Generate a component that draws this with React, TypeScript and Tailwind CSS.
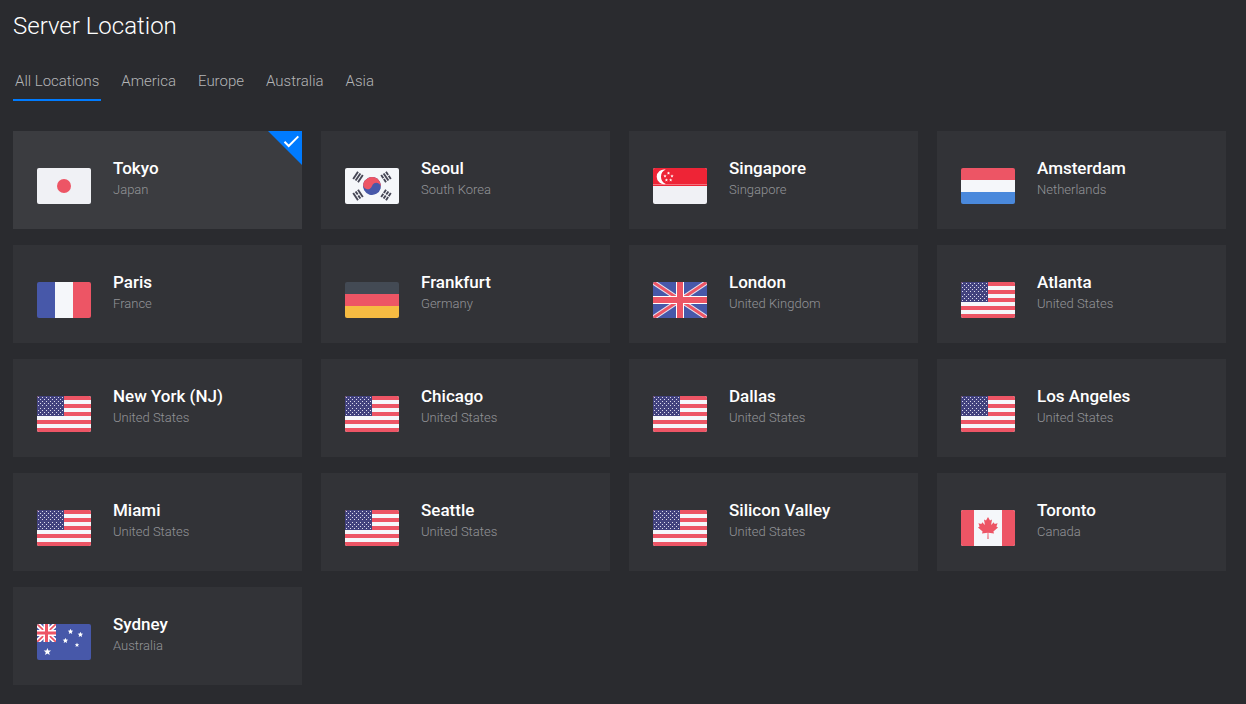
import { useState, type ReactNode } from 'react';
import clsx from 'clsx';

type Country = 'jp' | 'kr' | 'sg' | 'nl' | 'fr' | 'de' | 'gb' | 'us' | 'ca' | 'au';
type Region = 'America' | 'Europe' | 'Australia' | 'Asia';

interface Location {
  city: string;
  country: Country;
}

const COUNTRIES: Record<Country, { name: string; region: Region }> = {
  jp: { name: 'Japan', region: 'Asia' },
  kr: { name: 'South Korea', region: 'Asia' },
  sg: { name: 'Singapore', region: 'Asia' },
  nl: { name: 'Netherlands', region: 'Europe' },
  fr: { name: 'France', region: 'Europe' },
  de: { name: 'Germany', region: 'Europe' },
  gb: { name: 'United Kingdom', region: 'Europe' },
  us: { name: 'United States', region: 'America' },
  ca: { name: 'Canada', region: 'America' },
  au: { name: 'Australia', region: 'Australia' },
};

const LOCATIONS: Location[] = [
  { city: 'Tokyo', country: 'jp' },
  { city: 'Seoul', country: 'kr' },
  { city: 'Singapore', country: 'sg' },
  { city: 'Amsterdam', country: 'nl' },
  { city: 'Paris', country: 'fr' },
  { city: 'Frankfurt', country: 'de' },
  { city: 'London', country: 'gb' },
  { city: 'Atlanta', country: 'us' },
  { city: 'New York (NJ)', country: 'us' },
  { city: 'Chicago', country: 'us' },
  { city: 'Dallas', country: 'us' },
  { city: 'Los Angeles', country: 'us' },
  { city: 'Miami', country: 'us' },
  { city: 'Seattle', country: 'us' },
  { city: 'Silicon Valley', country: 'us' },
  { city: 'Toronto', country: 'ca' },
  { city: 'Sydney', country: 'au' },
];

const TABS = ['All Locations', 'America', 'Europe', 'Australia', 'Asia'] as const;

const RED = '#ed5565';
const WHITE = '#f5f7fa';
const BLUE = '#4758a9';

function starPoints(cx: number, cy: number, r: number) {
  return Array.from({ length: 10 }, (_, i) => {
    const radius = i % 2 ? r * 0.45 : r;
    const angle = (Math.PI / 5) * i - Math.PI / 2;
    return `${(cx + radius * Math.cos(angle)).toFixed(2)},${(cy + radius * Math.sin(angle)).toFixed(2)}`;
  }).join(' ');
}

function Star({ x, y, r }: { x: number; y: number; r: number }) {
  return <polygon points={starPoints(x, y, r)} fill="#fff" />;
}

function Trigram({ x, y, angle, broken }: { x: number; y: number; angle: number; broken: boolean[] }) {
  return (
    <g transform={`translate(${x} ${y}) rotate(${angle})`} stroke="#464655" strokeWidth="1.9">
      {broken.map((isBroken, i) => (
        <path key={i} d={isBroken ? `M-4.3 ${(i - 1) * 2.9}h3.8M.5 ${(i - 1) * 2.9}h3.8` : `M-4.3 ${(i - 1) * 2.9}h8.6`} />
      ))}
    </g>
  );
}

const cantonStars = Array.from({ length: 9 }, (_, row) =>
  Array.from({ length: row % 2 ? 6 : 7 }, (_, col) => ({
    x: (row % 2 ? 3 : 1) + col * 4,
    y: 1 + row * 2 + (row > 4 ? 1 : 0),
  })),
).flat();

const FLAGS: Record<Country, ReactNode> = {
  jp: (
    <>
      <path fill="#f0f1f5" d="M0 0h54v36H0z" />
      <circle cx="27" cy="18" r="7" fill={RED} />
    </>
  ),
  kr: (
    <>
      <path fill={WHITE} d="M0 0h54v36H0z" />
      <g transform="rotate(16 27 18)">
        <circle cx="27" cy="18" r="9" fill={BLUE} />
        <path fill={RED} d="M18 18A9 9 0 0 1 36 18A4.5 4.5 0 0 0 27 18A4.5 4.5 0 0 1 18 18z" />
      </g>
      <Trigram x={13} y={9} angle={-56} broken={[false, false, false]} />
      <Trigram x={41} y={9} angle={56} broken={[true, false, true]} />
      <Trigram x={13} y={27} angle={56} broken={[false, true, false]} />
      <Trigram x={41} y={27} angle={-56} broken={[true, true, true]} />
    </>
  ),
  sg: (
    <>
      <path fill="#f0f1f5" d="M0 0h54v36H0z" />
      <path fill="#ee2436" d="M0 0h54v16H0zM0 17h54v1H0z" />
      <path fill="#f4707c" d="M0 16h54v1H0z" />
      <path fill="#fff" d="M12.8 1.6a7.4 7.4 0 1 0 0 14.4a7.8 7.8 0 0 1 0-14.4z" />
      <Star x={15.5} y={5.2} r={1.7} />
      <Star x={12} y={8} r={1.7} />
      <Star x={19} y={8} r={1.7} />
      <Star x={13.4} y={12} r={1.7} />
      <Star x={17.7} y={12} r={1.7} />
    </>
  ),
  nl: (
    <>
      <path fill={RED} d="M0 0h54v12H0z" />
      <path fill={WHITE} d="M0 12h54v12H0z" />
      <path fill="#4a89dc" d="M0 24h54v12H0z" />
    </>
  ),
  fr: (
    <>
      <path fill={BLUE} d="M0 0h18v36H0z" />
      <path fill={WHITE} d="M18 0h18v36H18z" />
      <path fill={RED} d="M36 0h18v36H36z" />
    </>
  ),
  de: (
    <>
      <path fill="#434a54" d="M0 0h54v12H0z" />
      <path fill={RED} d="M0 12h54v12H0z" />
      <path fill="#f6bb42" d="M0 24h54v12H0z" />
    </>
  ),
  gb: (
    <>
      <path fill={BLUE} d="M0 0h54v36H0z" />
      <path stroke="#e6e3ee" strokeWidth="5" d="M0 0l54 36M54 0L0 36" />
      <path stroke={RED} strokeWidth="3" d="M0 0l54 36M54 0L0 36" />
      <path fill="#fff" d="M23 0h8v36h-8zM0 14h54v8H0z" />
      <path fill={RED} d="M24 0h6v36h-6zM0 15h54v6H0z" />
    </>
  ),
  us: (
    <>
      <path fill={WHITE} d="M0 0h54v36H0z" />
      <path fill={RED} d="M0 0h54v4H0zM0 8h54v4H0zM0 16h54v4H0zM0 24h54v4H0zM0 32h54v4H0z" />
      <path fill="#42427e" d="M0 0h27v20H0z" />
      {cantonStars.map((s) => (
        <path key={`${s.x}-${s.y}`} fill="#dcdcec" d={`M${s.x} ${s.y}h1v1h-1z`} />
      ))}
    </>
  ),
  ca: (
    <>
      <path fill={WHITE} d="M0 0h54v36H0z" />
      <path fill={RED} d="M0 0h13v36H0zM41 0h13v36H41z" />
      <path
        fill={RED}
        d="M27 7l-2 3.6-2-1 .9 5.5-2.7-2.9-.8 1.7-3-.6 1.2 3.2-1.6 1.1 4.6 4-.6 2 5.6-.8-.2 6.2h1.2l-.2-6.2 5.6.8-.6-2 4.6-4-1.6-1.1 1.2-3.2-3 .6-.8-1.7-2.7 2.9.9-5.5-2 1z"
      />
    </>
  ),
  au: (
    <>
      <path fill={BLUE} d="M0 0h54v36H0z" />
      <svg width="19" height="18" viewBox="0 0 19 18">
        <path stroke="#fff" strokeWidth="5" d="M0 0l19 18M19 0L0 18" />
        <path stroke={RED} strokeWidth="1.7" d="M0 0l19 18M19 0L0 18" />
        <path fill="#fff" d="M6.5 0h6v18h-6zM0 6h19v6H0z" />
        <path fill={RED} d="M8 0h3v18H8zM0 7.5h19v3H0z" />
      </svg>
      <Star x={10.4} y={27.8} r={3.9} />
      <Star x={33.5} y={7.6} r={2.9} />
      <Star x={43.4} y={10.6} r={2.9} />
      <Star x={28.4} y={16.6} r={2.9} />
      <Star x={40} y={21} r={2.4} />
    </>
  ),
};

function Flag({ country }: { country: Country }) {
  return (
    <svg className="h-9 w-[54px] shrink-0 rounded-xs" viewBox="0 0 54 36" fill="none" aria-hidden="true">
      {FLAGS[country]}
    </svg>
  );
}

function LocationCard({ location, selected, onSelect }: { location: Location; selected: boolean; onSelect: () => void }) {
  return (
    <button
      type="button"
      aria-pressed={selected}
      onClick={onSelect}
      className={clsx(
        'relative flex cursor-pointer items-start px-6 py-[25px] text-left',
        selected ? 'bg-[#3b3c40]' : 'bg-[#323337]',
      )}
    >
      <span className="flex pt-3">
        <Flag country={location.country} />
      </span>
      <span className="ml-[22px] flex flex-col gap-px">
        <span className="text-[17px] leading-6 font-medium text-white">{location.city}</span>
        <span className="text-[13px] leading-[18px] font-light text-[#939497]">{COUNTRIES[location.country].name}</span>
      </span>
      {selected && (
        <svg className="absolute top-0 right-0 size-[34px]" viewBox="0 0 34 34" fill="none" aria-hidden="true">
          <path fill="#007bff" d="M0 0h34v34z" />
          <path stroke="#fff" strokeWidth="2" d="M16.5 10.8l4.2 4.2 9.6-9.6" />
        </svg>
      )}
    </button>
  );
}

export default function App() {
  const [tab, setTab] = useState<(typeof TABS)[number]>('All Locations');
  const [selectedCity, setSelectedCity] = useState('Tokyo');
  const visible = LOCATIONS.filter((l) => tab === 'All Locations' || COUNTRIES[l.country].region === tab);

  return (
    <main className="min-h-screen bg-[#2a2b2f] pt-2 pr-5 pb-4 pl-[13px] font-[Roboto,sans-serif]">
      <h1 className="text-2xl leading-9 font-light text-white">Server Location</h1>
      <nav className="mt-4 flex gap-[18px]" aria-label="Regions">
        {TABS.map((name) => (
          <button
            key={name}
            type="button"
            aria-pressed={tab === name}
            onClick={() => setTab(name)}
            className={clsx(
              'cursor-pointer border-b-2 px-0.5 pt-2.5 pb-1.5 text-[15px] leading-[23px] font-light text-[#b4b5b7]',
              tab === name ? 'border-[#007bff]' : 'border-transparent',
            )}
          >
            {name}
          </button>
        ))}
      </nav>
      <section className="mt-[30px] grid grid-cols-4 gap-x-[19px] gap-y-4" aria-label="Locations">
        {visible.map((location) => (
          <LocationCard
            key={location.city}
            location={location}
            selected={location.city === selectedCity}
            onSelect={() => setSelectedCity(location.city)}
          />
        ))}
      </section>
    </main>
  );
}
